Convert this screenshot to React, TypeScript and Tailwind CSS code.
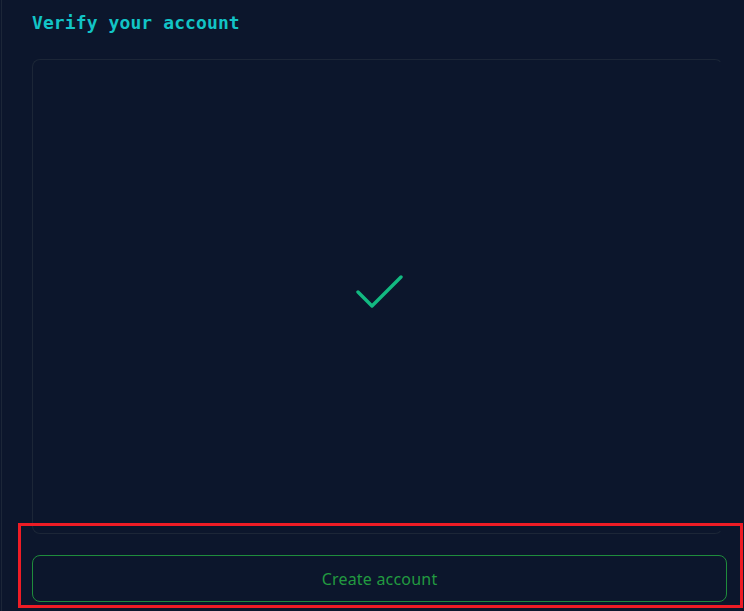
import React from "react";

export default function App() {
  return (
    <div className="relative w-[744px] h-[611px] bg-[#0c162c] overflow-hidden" style={{ fontFamily: "'Noto Sans', sans-serif" }}>
      <div className="h-full border-l border-[#1c2638] ml-px pl-[30px] pr-[17px] flex flex-col">
        <h1 className="mt-[11px] h-[24px] text-[18px] leading-[24px] font-bold text-[#12c4c6] tracking-[0.1px]" style={{ fontFamily: "'DejaVu Sans Mono', monospace" }}>
          Verify your account
        </h1>
        <div className="mt-[24px] h-[475px] w-[691px] rounded-[8px] border border-[#1c2637] border-r-transparent flex items-center justify-center">
          <svg width="48" height="36" viewBox="0 0 48 36" className="mt-[-8px] ml-[2px]" fill="none">
            <path d="M3 17 L17 31 L46 2" stroke="#12b981" strokeWidth="3.4" strokeLinecap="round" strokeLinejoin="round" />
          </svg>
        </div>
        <button className="mt-[21px] h-[47px] w-[695px] rounded-[8px] border border-[#1f8c3c] text-[#229a40] text-[16px] tracking-[0.2px] flex items-center justify-center">
          Create account
        </button>
      </div>
      <div className="absolute left-[18px] top-[523px] w-[725px] h-[85px] border-[3px] border-[#ee1c25] pointer-events-none" />
    </div>
  );
}
